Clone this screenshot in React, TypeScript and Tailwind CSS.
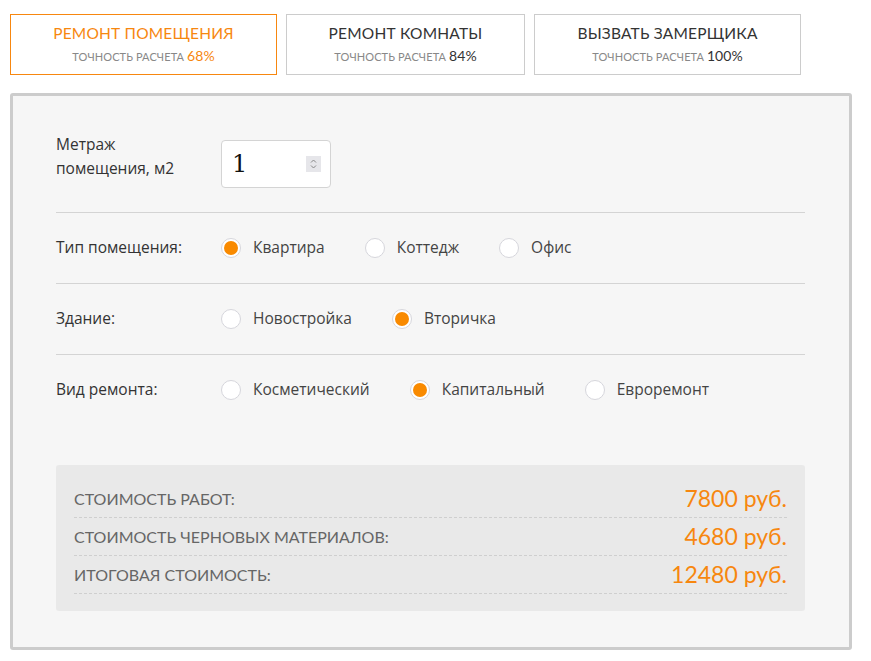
import React, { useState } from 'react';

const ORANGE = 'text-[#f7870f]';

const tabs = [
  { title: 'РЕМОНТ ПОМЕЩЕНИЯ', pct: '68%' },
  { title: 'РЕМОНТ КОМНАТЫ', pct: '84%' },
  { title: 'ВЫЗВАТЬ ЗАМЕРЩИКА', pct: '100%' },
];

const groups = [
  { label: 'Тип помещения:', options: ['Квартира', 'Коттедж', 'Офис'], value: 0 },
  { label: 'Здание:', options: ['Новостройка', 'Вторичка'], value: 1 },
  { label: 'Вид ремонта:', options: ['Косметический', 'Капитальный', 'Евроремонт'], value: 1 },
];

const totals = [
  { label: 'СТОИМОСТЬ РАБОТ:', value: '7800 руб.' },
  { label: 'СТОИМОСТЬ ЧЕРНОВЫХ МАТЕРИАЛОВ:', value: '4680 руб.' },
  { label: 'ИТОГОВАЯ СТОИМОСТЬ:', value: '12480 руб.' },
];

const Radio: React.FC<{ checked: boolean }> = ({ checked }) => (
  <span className="w-[20px] h-[20px] rounded-full bg-white border border-[#d6d6dc] flex items-center justify-center shrink-0">
    {checked && <span className="w-[14px] h-[14px] rounded-full bg-[#f98a00]" />}
  </span>
);

const App: React.FC = () => {
  const [active, setActive] = useState(0);
  const [sel, setSel] = useState(groups.map(g => g.value));

  return (
    <div className="w-[871px] h-[661px] bg-white pl-[10px] pt-[14px] font-['Lato',sans-serif]">
      <div className="flex gap-[9px]">
        {tabs.map((t, i) => (
          <button
            key={t.title}
            onClick={() => setActive(i)}
            className={`h-[61px] flex flex-col items-center pt-[9px] border ${i === 1 ? 'w-[239px]' : 'w-[267px]'} ${
              active === i ? 'border-[#f7870f]' : 'border-[#cccccc]'
            }`}
          >
            <span className={`text-[15.5px] leading-[18px] tracking-[0.2px] ${active === i ? ORANGE : 'text-[#333]'}`}>{t.title}</span>
            <span className="mt-[5px] text-[11px] leading-[18px] tracking-[0.1px] text-[#888]">
              ТОЧНОСТЬ РАСЧЕТА{' '}
              <span className={`text-[14px] ${active === i ? ORANGE : 'text-[#333]'}`}>{t.pct}</span>
            </span>
          </button>
        ))}
      </div>

      <div className="mt-[18px] w-[842px] h-[557px] border-[3px] border-[#cccccc] rounded-[3px] bg-[#f6f6f6] pl-[43px] pr-[44px] pt-[36px] font-['Open_Sans',sans-serif] text-[#333]">
        <div className="flex items-start pb-[24px] border-b border-[#d4d4d4]">
          <div className="w-[165px] text-[15.5px] leading-[24px]">
            Метраж<br />помещения, м2
          </div>
          <div className="mt-[8px] w-[110px] h-[48px] bg-white border border-[#d4d4d4] rounded-[4px] flex items-center pl-[10px] pr-[9px]">
            <span className="flex-1 text-[24px] font-['DejaVu_Serif',serif] text-[#111]">1</span>
            <span className="w-[15px] h-[16px] bg-[#e6e6ea] flex flex-col items-center justify-center">
              <svg width="7" height="12" viewBox="0 0 7 12" fill="none" stroke="#888" strokeWidth="1">
                <path d="M1 4.5 L3.5 2 L6 4.5" />
                <path d="M1 7.5 L3.5 10 L6 7.5" />
              </svg>
            </span>
          </div>
        </div>

        {groups.map((g, gi) => (
          <div
            key={g.label}
            className={`flex items-center h-[71px] pb-[1px] ${gi < groups.length - 1 ? 'border-b border-[#d4d4d4]' : ''}`}
          >
            <div className="w-[165px] text-[15.5px]">{g.label}</div>
            <div className="flex items-center">
              {g.options.map((o, oi) => (
                <label
                  key={o}
                  onClick={() => setSel(sel.map((v, k) => (k === gi ? oi : v)))}
                  className="flex items-center gap-[12px] mr-[40px] cursor-pointer"
                >
                  <Radio checked={sel[gi] === oi} />
                  <span className="text-[15.5px] text-[#444]">{o}</span>
                </label>
              ))}
            </div>
          </div>
        ))}

        <div className="mt-[39px] bg-[#e9e9e9] rounded-[3px] px-[18px] pt-[15px] pb-[17px] font-['Lato',sans-serif]">
          {totals.map(t => (
            <div key={t.label} className="flex items-center justify-between py-[6px] border-b border-dashed border-[#cfcfcf]">
              <span className="text-[16px] leading-[25px] text-[#666]">{t.label}</span>
              <span className={`text-[23px] leading-[25px] ${ORANGE}`}>{t.value}</span>
            </div>
          ))}
        </div>
      </div>
    </div>
  );
};

export default App;
